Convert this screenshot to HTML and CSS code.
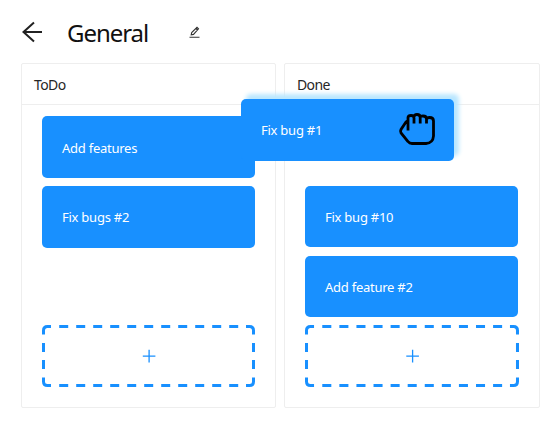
FILE: index.html
```html
<!DOCTYPE html>
<html lang="en">
<head>
<meta charset="utf-8">
<title>General</title>
<link rel="stylesheet" href="styles.css">
</head>
<body>
<svg class="defs" width="0" height="0">
  <symbol id="slot" viewBox="0 0 213 62" preserveAspectRatio="none">
    <g fill="none" stroke="#1890ff" stroke-width="3">
      <path d="M9 1.5H5.5Q1.5 1.5 1.5 5.5V9.5M204 1.5h3.500q4 0 4 4V9.500M1.500 52.500V56.500q0 4 4 4H9M204 60.500h3.500q4 0 4-4V52.500"/>
      <path stroke-dasharray="9 8" d="M17.200 1.500H197M17.200 60.500H197M1.500 18V45M211.500 18V45"/>
      <path stroke-width="1.300" d="M100.800 31.200h12.600M107.100 24.800v12.800"/>
    </g>
  </symbol>
</svg>
<header class="header">
  <svg class="back" width="22" height="22" viewBox="0 0 22 22"><path d="M13 1.500L2.500 11l10.500 9.500M2.500 11H21" /></svg>
  <h1 class="title">General</h1>
  <svg class="edit" width="12" height="12" viewBox="0 0 12 12"><path d="M.5 11.300H10.500M2.200 8.900l.5-2.300L8 1.300l1.500 1.500L4.500 8.400zM7 2.500l1.500 1.500"/></svg>
</header>
<main class="board">
  <section class="column">
    <h2 class="heading">ToDo</h2>
    <div class="cards">
      <div class="card lead">Add features</div>
      <div class="card">Fix bugs #2</div>
      <svg class="slot"><use href="#slot"/></svg>
    </div>
  </section>
  <section class="column done">
    <h2 class="heading">Done</h2>
    <div class="cards">
      <div class="card first">Fix bug #10</div>
      <div class="card">Add feature #2</div>
      <svg class="slot"><use href="#slot"/></svg>
    </div>
  </section>
</main>
<div class="card dragged">Fix bug #1
  <svg class="hand" width="38" height="34" viewBox="0 0 38 34"><path d="M10 18.500V5.500Q10 3.500 13 3.500Q16 3.500 16 6V11.500M16 5Q16 2.500 19 2.500Q22.200 2.500 22.200 5.500V11.500M22.200 5Q22.500 4 25 4Q28.500 4 28.500 7V11.500M28.500 7Q29 5.500 31.500 5.500Q35.500 5.500 35.500 9V24Q35 31 28 31.500H14Q11.500 31.500 10 29.500L3 21Q2 19.500 3 17.500L8 10L10 8.500"/></svg>
</div>
</body>
</html>
```

FILE: styles.css
```css
* { box-sizing: border-box; }
body {
  margin: 0;
  background: #fff;
  color: #262626;
  font-family: "Noto Sans", sans-serif;
  position: relative;
  height: 421px;
  overflow: hidden;
}
.defs { position: absolute; }
.header {
  height: 63px;
  padding: 0 0 0 21px;
  display: flex;
  align-items: flex-start;
}
.back { margin-top: 21px; fill: none; stroke: #222; stroke-width: 2; }
.title {
  margin: 16px 0 0 24px;
  width: 81px;
  font-size: 24px;
  font-weight: 400;
  line-height: 34px;
  letter-spacing: -1.05px;
  color: #111;
  white-space: nowrap;
}
.edit { margin: 26px 0 0 41px; fill: none; stroke: #333; stroke-width: 1.1; }
.board { display: flex; gap: 8px; padding-left: 21px; }
.column {
  width: 255px;
  height: 345px;
  border: 1px solid #eee;
  border-radius: 2px;
  display: flex;
  flex-direction: column;
}
.done { width: 256px; }
.heading {
  margin: 0;
  height: 41px;
  padding: 0 12px;
  border-bottom: 1px solid #eee;
  font-size: 14px;
  font-weight: 400;
  line-height: 42px;
  letter-spacing: -0.6px;
}
.cards {
  flex: 1;
  padding: 11px 20px 20px;
  display: flex;
  flex-direction: column;
  gap: 8px;
}
.card {
  height: 62px;
  padding-left: 20px;
  border-radius: 5px;
  background: #1890ff;
  color: #fff;
  font-size: 13px;
  line-height: 63px;
  letter-spacing: -0.25px;
  white-space: nowrap;
}
.lead { line-height: 65px; }
.done .card { width: 213px; height: 61px; }
.done .first { margin-top: 70px; margin-bottom: 1px; }
.slot { display: block; width: 213px; height: 62px; margin-top: auto; flex: none; }
.done .slot { width: 214px; }
.dragged {
  position: absolute;
  left: 241px;
  top: 99px;
  width: 213px;
  box-shadow: 5px -5px 4px 0 #bae7ff;
}
.hand {
  position: absolute;
  left: 157px;
  top: 13px;
  fill: none;
  stroke: #000;
  stroke-width: 2.8;
}
```
